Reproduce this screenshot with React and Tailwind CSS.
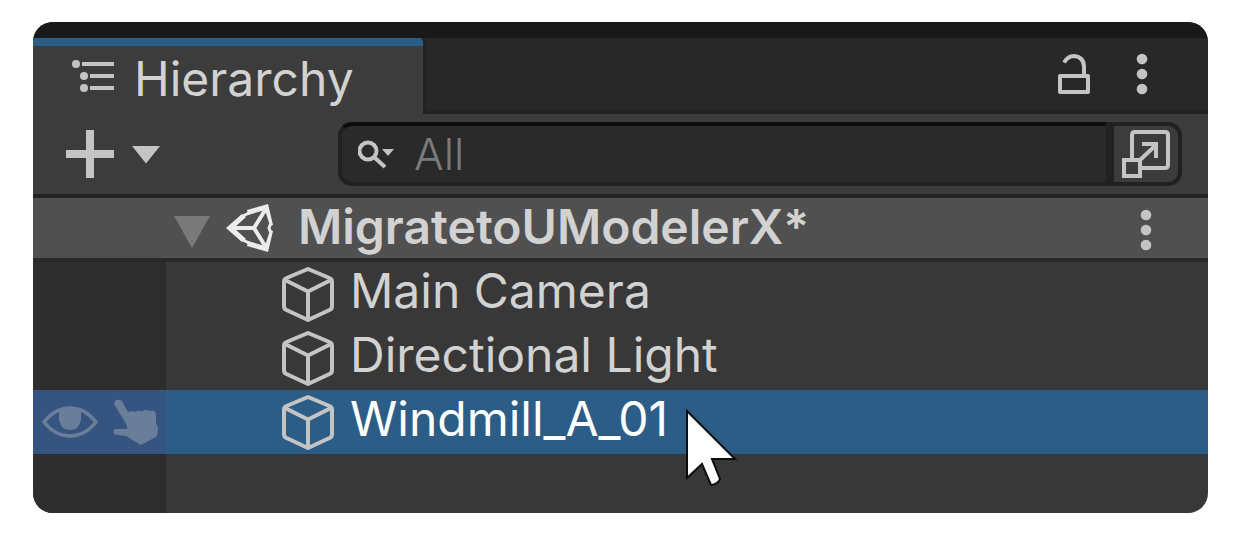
function Dots({ className }) {
  return (
    <svg className={className} viewBox="0 0 12 42" width="12" height="42" fill="#c4c4c4" aria-hidden="true">
      <circle cx="6" cy="6" r="5.3" />
      <circle cx="6" cy="21" r="5.3" />
      <circle cx="6" cy="36" r="5.3" />
    </svg>
  );
}

function CubeIcon() {
  return (
    <svg width="52" height="56" viewBox="0 0 52 56" fill="none" stroke="#c4c4c4" strokeWidth="4" strokeLinejoin="round" className="shrink-0" aria-hidden="true">
      <path d="M26 3 L47.5 12 Q50 13 50 15.5 V40.5 Q50 43 47.5 44 L26 54 L4.5 44 Q2 43 2 40.5 V15.5 Q2 13 4.5 12 Z" />
      <path d="M3 14 L26 25.5 L49 14 M26 25.5 V53" />
    </svg>
  );
}

function UnityIcon() {
  return (
    <svg width="48" height="48" viewBox="0 0 48 48" fill="none" stroke="#ececec" strokeWidth="4" className="shrink-0" aria-hidden="true">
      <path d="M0 24 L16 10 L20 13 L8 24 L20 35 L16 38 Z" fill="#ececec" stroke="none" />
      <path d="M21 6 L42 0 L47 21 L44 22 L39 6 L22 11 Z M21 42 L42 48 L47 27 L44 26 L39 42 L22 37 Z" fill="#ececec" stroke="none" />
      <path d="M14 13.5 L24 8.5 M14 34.5 L24 39.5 M44.5 20 L43 24 L44.5 28" strokeWidth="3" />
      <path d="M4 24 H28 L41 3 M28 24 L41 45" />
    </svg>
  );
}

function EyeIcon() {
  return (
    <svg width="56" height="32" viewBox="0 0 56 32" fill="none" aria-hidden="true">
      <path d="M2 16 Q13 2 28 2 T54 16 Q43 30 28 30 T2 16 Z" stroke="#6a7e9b" strokeWidth="3.5" />
      <path d="M17 3 H39 V14 Q37 24 28 24 Q19 24 17 14 Z" fill="#6a7e9b" />
    </svg>
  );
}

function HandIcon() {
  return (
    <svg width="46" height="46" viewBox="0 0 46 46" fill="#6a7e9b" aria-hidden="true">
      <path d="M1 5 Q2 0 7 1 Q9 1 10 4 L15 13 Q18 11 22 13 Q25 11 29 12.5 Q33 10 37 12 Q42 10 43 15 L43 24 Q47 31 43 38 L28 46 L13 37 L2 35.5 Q-1 32 2 30 L14 30 Q15 27 12 23 Z" />
    </svg>
  );
}

function Row({ label, selected }) {
  return (
    <li className={selected ? "flex h-16 bg-[#2c5d87] text-white" : "flex h-16 text-[#d2d2d2]"} aria-selected={selected} role="treeitem">
      <div className={selected ? "flex w-[133px] shrink-0 items-center justify-between bg-[#35547f] pr-[7px] pl-[9px]" : "w-[133px] shrink-0 bg-[#2d2d2d]"}>
        {selected && (
          <>
            <button type="button" aria-label="Toggle visibility"><EyeIcon /></button>
            <button type="button" aria-label="Toggle picking"><HandIcon /></button>
          </>
        )}
      </div>
      <div className="flex items-center gap-4 pl-[116px]">
        <CubeIcon />
        <span className="pb-1.5 text-5xl leading-[60px] whitespace-nowrap">{label}</span>
      </div>
    </li>
  );
}

export default function App() {
  return (
    <div className="bg-white px-[33px] pt-[22px] pb-[23px] font-['Inter','Liberation_Sans',sans-serif]">
      <main className="relative overflow-hidden rounded-[20px] bg-[#383838]">
        <div className="h-4 bg-[#191919]" />

        <header className="flex h-[76px] bg-[#282828]">
          <div className="flex w-[390px] items-center gap-5 rounded-tr-[4px] border-t-8 border-[#2c5d87] bg-[#3c3c3c] pl-[39px] text-[#d2d2d2]">
            <svg width="42" height="32" viewBox="0 0 42 32" fill="#c4c4c4" className="mb-2" aria-hidden="true">
              <circle cx="4" cy="4" r="4" />
              <circle cx="12" cy="16" r="4" />
              <circle cx="12" cy="28" r="4" />
              <path d="M10 2h32v4H10zM18 14h24v4H18zM18 26h24v4H18z" />
            </svg>
            <h1 className="pb-0.5 text-5xl leading-[60px] font-normal">Hierarchy</h1>
          </div>
          <div className="flex flex-1 items-center justify-end gap-[46px] border-b-4 border-l-4 border-[#232323] pr-[60px]">
            <button type="button" aria-label="Lock">
              <svg width="32" height="42" viewBox="0 0 32 42" fill="none" stroke="#c4c4c4" strokeWidth="4" aria-hidden="true">
                <path d="M2 23 H30 V39 H2 Z" strokeLinejoin="round" />
                <path d="M6 9.5 Q10 3 16 3 Q26 4 26 14 V23" />
              </svg>
            </button>
            <button type="button" aria-label="Tab menu"><Dots /></button>
          </div>
        </header>

        <div className="flex h-[84px] items-start border-b-4 border-[#232323] bg-[#3c3c3c] pt-2 pr-[26px] pl-[33px]">
          <button type="button" aria-label="Create" className="flex h-16 shrink-0 items-center">
            <svg width="94" height="48" viewBox="0 0 94 48" fill="#c4c4c4" aria-hidden="true">
              <path d="M20 0h8v20h20v8H28v20h-8V28H0v-8h20zM66 16h28L80 33.5z" />
            </svg>
          </button>
          <div className="ml-[178px] flex h-16 min-w-0 flex-1">
            <label className="flex min-w-0 flex-1 items-center gap-[18px] rounded-l-[14px] border-4 border-r-0 border-[#212121] border-t-[#0d0d0d] bg-[#2a2a2a] pl-4">
              <svg width="38" height="30" viewBox="0 0 38 30" fill="none" className="shrink-0" aria-hidden="true">
                <circle cx="10" cy="12" r="8.5" stroke="#c4c4c4" strokeWidth="4" />
                <path d="M16 18 L27 28" stroke="#c4c4c4" strokeWidth="4" />
                <path d="M24 10h12l-6 7z" fill="#c4c4c4" />
              </svg>
              <input type="text" aria-label="Search" placeholder="All" className="h-14 w-full min-w-0 bg-transparent text-[44px] leading-[56px] font-light text-[#d2d2d2] outline-none placeholder:text-[#7b7b7b]" />
            </label>
            <button type="button" aria-label="Open search window" className="flex w-[76px] shrink-0 items-center justify-center rounded-r-[14px] border-4 border-l-8 border-[#212121] bg-[#3c3c3c]">
              <svg width="48" height="48" viewBox="0 0 48 48" fill="none" stroke="#c4c4c4" strokeWidth="4" aria-hidden="true">
                <path d="M10 28 V5 Q10 2 13 2 H43 Q46 2 46 5 V35 Q46 38 43 38 H20" />
                <path d="M2 30 H18 V46 H2 Z M18 30 L34 15 M20 14 H34 V28" />
              </svg>
            </button>
          </div>
        </div>

        <div className="flex h-16 items-center border-b-4 border-[#292929] bg-[#505050] pr-14 pl-[141px]">
          <button type="button" aria-label="Collapse scene">
            <svg width="36" height="32" viewBox="0 0 36 32" fill="#797979" className="mt-2" aria-hidden="true">
              <path d="M0 0h36L18 32z" />
            </svg>
          </button>
          <div className="ml-4"><UnityIcon /></div>
          <h2 className="ml-6 pb-0.5 text-5xl leading-[60px] font-semibold text-[#d2d2d2]">MigratetoUModelerX*</h2>
          <button type="button" aria-label="Scene menu" className="ml-auto"><Dots className="mt-1" /></button>
        </div>

        <ul role="tree" aria-label="Scene objects">
          <Row label="Main Camera" />
          <Row label="Directional Light" />
          <Row label="Windmill_A_01" selected />
        </ul>
        <div className="h-[59px] w-[133px] bg-[#2d2d2d]" />

        <svg className="absolute top-[386px] left-[652px]" width="54" height="80" viewBox="0 0 54 80" fill="#fff" stroke="#0d0d0d" strokeWidth="2" aria-hidden="true">
          <path d="M2 3 L50 51 H27 L35 71 Q33 76 26 77 L17 56 L2 70 Z" />
        </svg>
      </main>
    </div>
  );
}
